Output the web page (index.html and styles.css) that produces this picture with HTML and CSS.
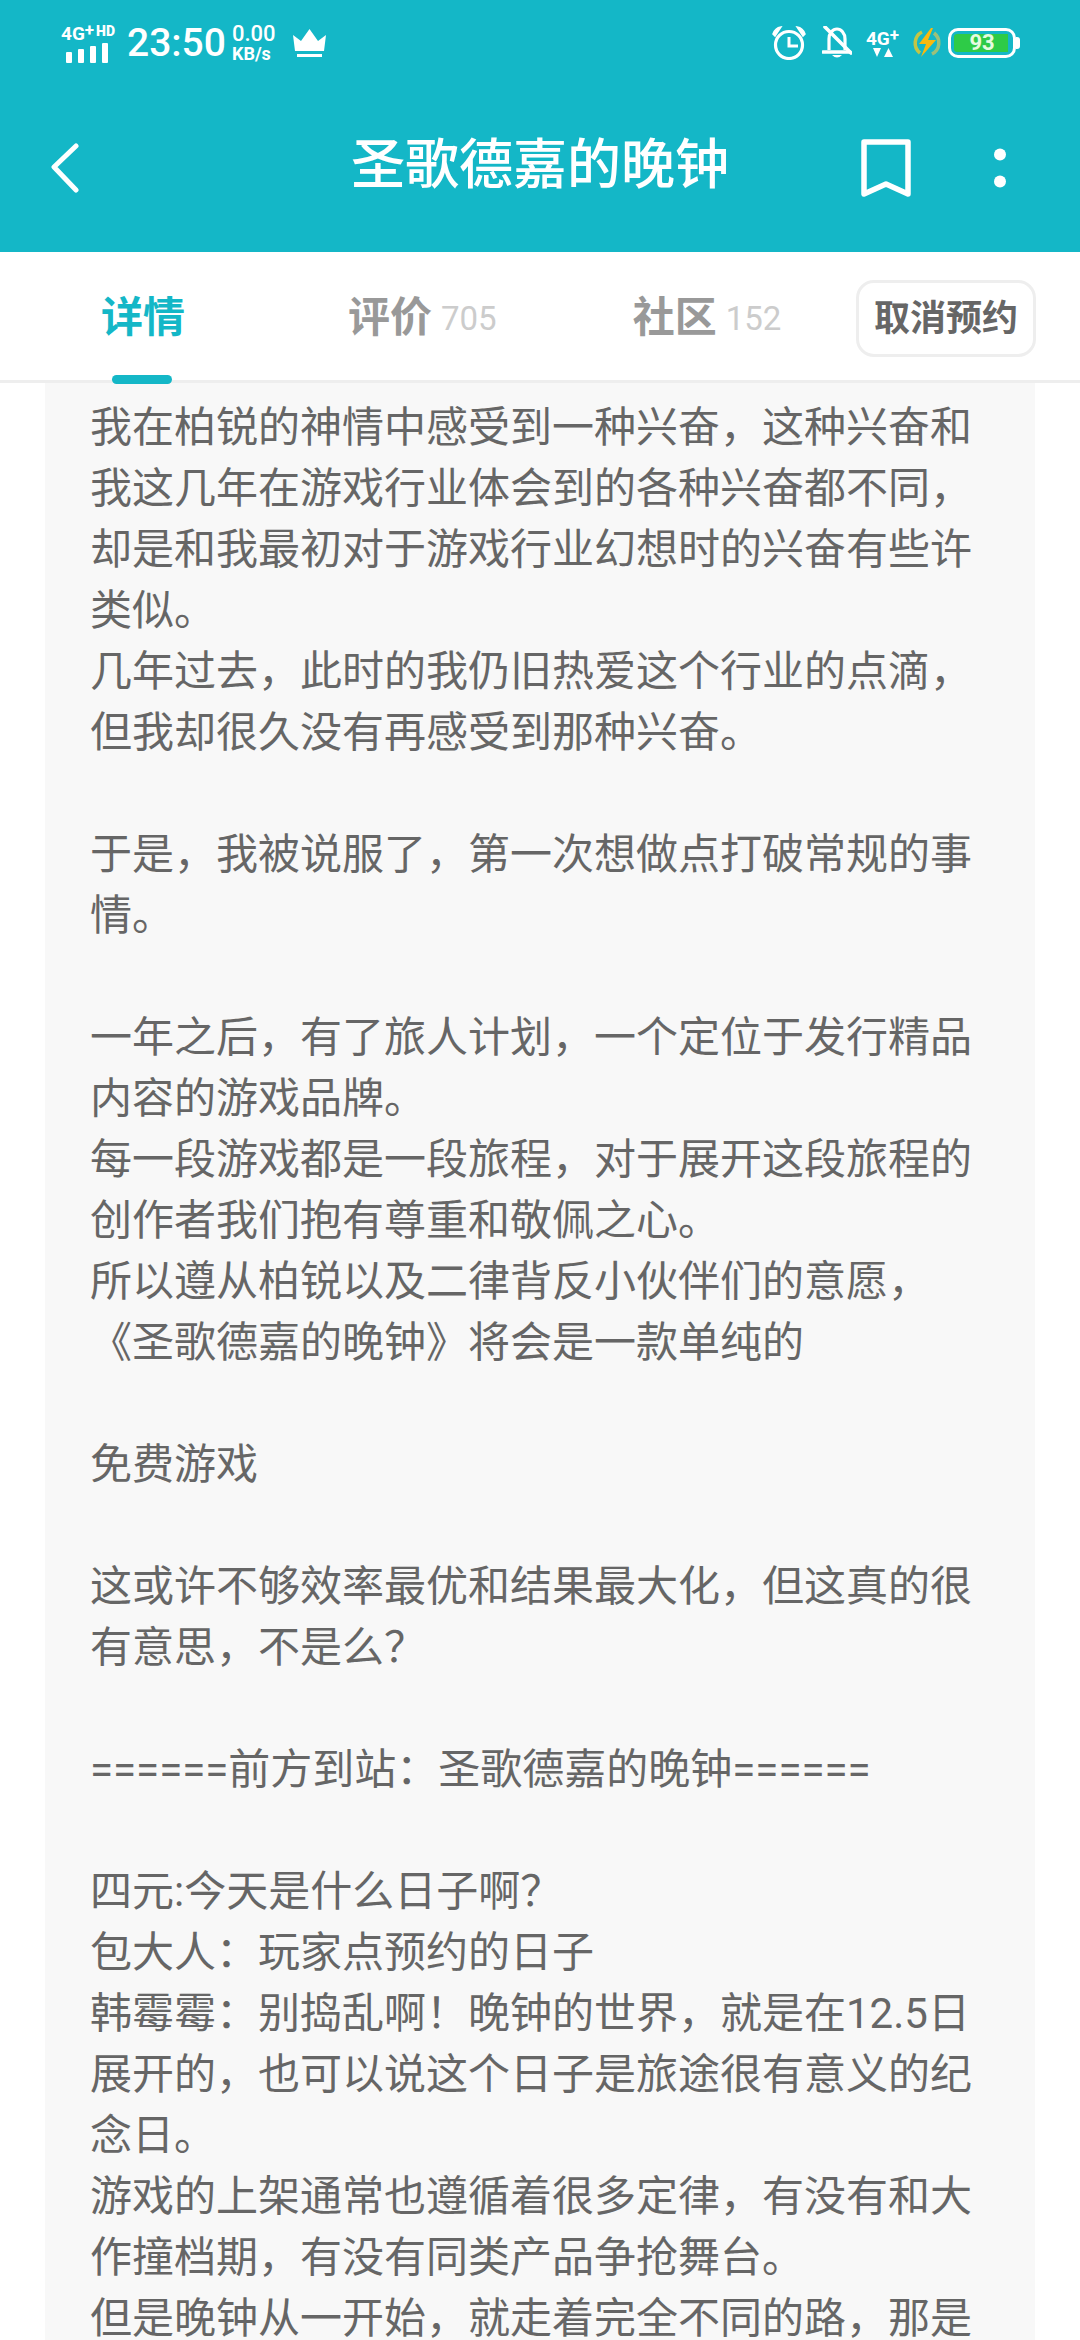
FILE: index.html
```html
<!DOCTYPE html>
<html lang="zh">
<head>
<meta charset="utf-8">
<title>圣歌德嘉的晚钟</title>
<link rel="stylesheet" href="styles.css">
</head>
<body>
<div class="page">
  <header class="appbar">
    <div class="status">
      <div class="status-left">
        <div class="net net-a">
          <div class="net-label"><span>4G</span><sup>+</sup><b>HD</b></div>
          <svg class="bars" width="44" height="20" viewBox="0 0 44 20"><g fill="#fff"><rect x="0" y="9" width="6" height="11" rx="1"/><rect x="12" y="6" width="6" height="14" rx="1"/><rect x="24" y="3" width="6" height="17" rx="1"/><rect x="36" y="0" width="6" height="20" rx="1"/></g></svg>
        </div>
        <span class="clock">23:50</span>
        <div class="speed"><span>0.00</span><span class="unit">KB/s</span></div>
        <svg class="crown" width="33" height="29" viewBox="0 0 33 29"><path fill="#fff" d="M0 6l8 6 8.500-12L25 12l8-6-2 16H2z"/><rect x="4" y="25" width="25" height="3" fill="#fff"/></svg>
      </div>
      <div class="status-right">
        <svg class="alarm" width="34" height="34" viewBox="0 0 34 34"><circle cx="17" cy="19" r="13.500" fill="none" stroke="#fff" stroke-width="3.200"/><path d="M17 11v9h9" fill="none" stroke="#fff" stroke-width="3"/><path d="M1 8Q3 2 9 1L3 10zM33 8Q31 2 25 1L31 10z" fill="#fff" stroke="#fff" stroke-width="1.500"/></svg>
        <svg class="bell" width="30" height="34" viewBox="0 0 30 34"><path d="M7 24V13C7 7 11 3 15 3s8 4 8 10v11" fill="none" stroke="#fff" stroke-width="3.200"/><path d="M1 26h27" stroke="#fff" stroke-width="3.400" stroke-linecap="round"/><path d="M10 29q5 5 10 0z" fill="#fff"/><path d="M3 1l26 26" stroke="#fff" stroke-width="3.600" stroke-linecap="round"/></svg>
        <div class="net net-b">
          <div class="net-label"><span>4G</span><sup>+</sup></div>
          <svg width="20" height="9" viewBox="0 0 20 9"><path fill="#fff" d="M0 0h8L4 9zM11 9l4.500-9L20 9z"/></svg>
        </div>
        <svg class="bolt" width="30" height="30" viewBox="0 0 30 30"><path d="M8 25A12.500 12.500 0 0 1 10 4" fill="none" stroke="#c3c545" stroke-width="3.500"/><path d="M22 5A12.500 12.500 0 0 1 20 26" fill="none" stroke="#9cc07a" stroke-width="3.500"/><path fill="#f9b90f" d="M19 0L7 16h7l-5 13 15-17h-8l5-12z"/></svg>
        <div class="battery"><div class="cell"><div class="level"></div><span class="pct">93</span></div><div class="nub"></div></div>
      </div>
    </div>
    <div class="titlebar">
      <svg class="back" width="30" height="50" viewBox="0 0 30 50"><path d="M26 3L4 24l22 23" fill="none" stroke="#fff" stroke-width="5" stroke-linecap="round" stroke-linejoin="round"/></svg>
      <h1 class="title">圣歌德嘉的晚钟</h1>
      <svg class="mark" width="50" height="59" viewBox="0 0 50 59"><path d="M3 3h44v52L25 45 3 55z" fill="none" stroke="#fff" stroke-width="5.500" stroke-linejoin="round"/></svg>
      <svg class="more" width="14" height="40" viewBox="0 0 14 40"><circle cx="7" cy="6.500" r="6" fill="#fff"/><circle cx="7" cy="33.500" r="6" fill="#fff"/></svg>
    </div>
  </header>
  <nav class="tabs">
    <div class="tab active">详情<i class="ink"></i></div>
    <div class="tab second">评价<span class="count">705</span></div>
    <div class="tab third">社区<span class="count">152</span></div>
    <div class="cancel">取消预约</div>
  </nav>
  <main class="body">
    <article class="card">
我在柏锐的神情中感受到一种兴奋，这种兴奋和<br>我这几年在游戏行业体会到的各种兴奋都不同，<br>却是和我最初对于游戏行业幻想时的兴奋有些许<br>类似。<br>几年过去，此时的我仍旧热爱这个行业的点滴，<br>但我却很久没有再感受到那种兴奋。<br><br>于是，我被说服了，第一次想做点打破常规的事<br>情。<br><br>一年之后，有了旅人计划，一个定位于发行精品<br>内容的游戏品牌。<br>每一段游戏都是一段旅程，对于展开这段旅程的<br>创作者我们抱有尊重和敬佩之心。<br>所以遵从柏锐以及二律背反小伙伴们的意愿，<br>《圣歌德嘉的晚钟》将会是一款单纯的<br><br>免费游戏<br><br>这或许不够效率最优和结果最大化，但这真的很<br>有意思，不是么？<br><br>======前方到站：圣歌德嘉的晚钟======<br><br>四元:今天是什么日子啊？<br>包大人：玩家点预约的日子<br>韩霉霉：别捣乱啊！晚钟的世界，就是在12.5日<br>展开的，也可以说这个日子是旅途很有意义的纪<br>念日。<br>游戏的上架通常也遵循着很多定律，有没有和大<br>作撞档期，有没有同类产品争抢舞台。<br>但是晚钟从一开始，就走着完全不同的路，那是
    </article>
  </main>
</div>
</body>
</html>
```
FILE: styles.css
```css
* { box-sizing: border-box; }
html, body { margin: 0; padding: 0; }
body { background: #fff; font-family: Roboto, "Noto Sans CJK SC", "Noto Sans", sans-serif; }
.page { width: 1080px; height: 2340px; overflow: hidden; display: flex; flex-direction: column; }
.appbar { height: 252px; background: #14b7c7; color: #fff; flex: none; }
.status { height: 84px; display: flex; justify-content: space-between; align-items: center; padding: 2px 60px 0; }
.status-left, .status-right { display: flex; align-items: center; }
.status-right { gap: 14px; }
.net { display: flex; flex-direction: column; align-items: center; gap: 1px; font-family: Roboto, sans-serif; font-weight: 700; line-height: 1; }
.net-a { width: 56px; }
.net-label { font-size: 19px; display: flex; align-items: flex-start; height: 18px; white-space: nowrap; }
.net-label sup { font-size: 17px; line-height: 12px; margin: 0 2px 0 0; }
.net-label b { font-size: 14px; line-height: 14px; font-weight: 900; }
.clock { font: 500 39px/1 Roboto, sans-serif; margin-left: 11px; }
.speed { display: flex; flex-direction: column; font: 500 22px/21px Roboto, sans-serif; margin-left: 6px; }
.speed .unit { font-size: 18px; line-height: 19px; font-weight: 700; }
.crown { margin-left: 17px; }
.alarm { margin-right: 2px; }
.net-b { margin-right: -3px; }
.bolt { margin-right: -8px; }
.battery { display: flex; align-items: center; }
.cell { position: relative; width: 68px; height: 30px; border: 3px solid #fff; border-radius: 10px; padding: 3px; }
.level { width: 54px; height: 100%; background: #2ecb47; border-radius: 3px 0 0 3px; }
.pct { position: absolute; inset: 0; text-align: center; font: 700 22px/24px Roboto, sans-serif; color: #e6fbe0; }
.nub { width: 4px; height: 12px; background: #fff; border-radius: 0 3px 3px 0; }
.titlebar { height: 168px; position: relative; display: flex; align-items: center; padding: 0 73px 0 50px; }
.title { position: absolute; left: 0; right: 0; top: 0; margin: 0; text-align: center; font-size: 54px; font-weight: 500; line-height: 164px; }
.mark { margin-left: auto; }
.more { margin-left: 82px; }
.tabs { height: 131px; flex: none; display: flex; align-items: center; border-bottom: 3px solid #eeeeee; position: relative; }
.tab { position: relative; font-size: 42px; font-weight: 700; color: #999; line-height: 60px; white-space: nowrap; margin-top: 3px; }
.tab.active { color: #14b7c7; margin-left: 101px; }
.second { margin-left: 163px; }
.third { margin-left: 136px; }
.count { font: 400 33px Roboto, sans-serif; color: #ccc; margin-left: 9px; vertical-align: 2px; }
.ink { position: absolute; left: 11px; bottom: -36px; width: 60px; height: 9px; background: #14b7c7; border-radius: 5px; }
.cancel { position: absolute; left: 856px; top: 28px; width: 180px; height: 77px; border: 3px solid #eee; border-radius: 18px; font-size: 36px; font-weight: 700; line-height: 73px; text-align: center; color: #666; }
.body { flex: 1; padding: 0 45px 0 45px; overflow: hidden; }
.card { background: #f8f8f8; padding: 14px 0 0 45px; height: 100%; font-size: 42px; line-height: 61px; color: #666; white-space: nowrap; }
```
